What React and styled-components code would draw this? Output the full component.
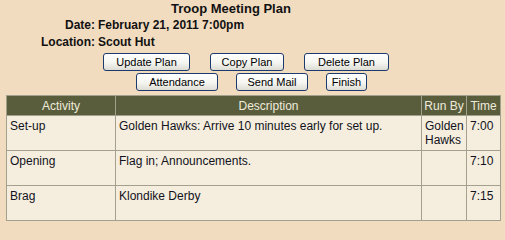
import React from "react";
import styled, { createGlobalStyle } from "styled-components";

const rows = [
    { activity: "Set-up", description: "Golden Hawks: Arrive 10 minutes early for set up.", runBy: "Golden Hawks", time: "7:00" },
    { activity: "Opening", description: "Flag in; Announcements.", runBy: "", time: "7:10" },
    { activity: "Brag", description: "Klondike Derby", runBy: "", time: "7:15" },
];

const App = () => {
    return (
        <DivRoot>
            <GlobalStyle />
            <H1Title>Troop Meeting Plan</H1Title>
            <DivInfo>
                <SpanLabel>Date:</SpanLabel>
                <SpanValue>February 21, 2011 7:00pm</SpanValue>
                <SpanLabel>Location:</SpanLabel>
                <SpanValue>Scout Hut</SpanValue>
            </DivInfo>
            <DivButtons>
                <DivButtonRow $indent={103} $gap={20}>
                    <Button $w={87}>Update Plan</Button>
                    <Button $w={74}>Copy Plan</Button>
                    <Button $w={85}>Delete Plan</Button>
                </DivButtonRow>
                <DivButtonRow $indent={136} $gap={18}>
                    <Button $w={82}>Attendance</Button>
                    <Button $w={72}>Send Mail</Button>
                    <Button $w={41}>Finish</Button>
                </DivButtonRow>
            </DivButtons>
            <Table>
                <colgroup>
                    <col style={{ width: "109px" }} />
                    <col style={{ width: "306px" }} />
                    <col style={{ width: "45px" }} />
                    <col style={{ width: "34px" }} />
                </colgroup>
                <thead>
                    <tr>
                        <Th>Activity</Th>
                        <Th>Description</Th>
                        <Th>Run By</Th>
                        <Th>Time</Th>
                    </tr>
                </thead>
                <tbody>
                    {rows.map((row) => (
                        <tr key={row.activity}>
                            <Td>{row.activity}</Td>
                            <Td>{row.description}</Td>
                            <Td>{row.runBy}</Td>
                            <Td>{row.time}</Td>
                        </tr>
                    ))}
                </tbody>
            </Table>
        </DivRoot>
    );
};

//#region Styles

const GlobalStyle = createGlobalStyle`
    html, body {
        margin: 0;
        padding: 0;
        background: #f2dcc0;
    }
    body {
        font-family: "Liberation Sans", Arial, sans-serif;
        color: #111;
    }
`;

const DivRoot = styled.div`
    width: 505px;
    display: flex;
    flex-direction: column;
`;

const H1Title = styled.h1`
    margin: 0;
    padding-left: 171px;
    font-size: 13px;
    font-weight: bold;
    line-height: 17px;
`;

const DivInfo = styled.div`
    display: grid;
    grid-template-columns: 95px auto;
    column-gap: 3px;
    font-size: 12px;
    font-weight: bold;
    line-height: 17px;
`;

const SpanLabel = styled.span`
    text-align: right;
`;

const SpanValue = styled.span`
    text-align: left;
`;

const DivButtons = styled.div`
    display: flex;
    flex-direction: column;
    gap: 2px;
    margin-top: 2px;
`;

const DivButtonRow = styled.div`
    display: flex;
    gap: ${(p) => p.$gap}px;
    padding-left: ${(p) => p.$indent}px;
`;

const Button = styled.button`
    box-sizing: border-box;
    width: ${(p) => p.$w}px;
    height: 18px;
    padding: 0;
    border: 1px solid #1d3a6c;
    border-radius: 3px;
    background: linear-gradient(#ffffff, #f5f5f1 55%, #dddcd4);
    font-family: "Liberation Sans", Arial, sans-serif;
    font-size: 11px;
    line-height: 14px;
    color: #000;
    cursor: pointer;
`;

const Table = styled.table`
    margin: 4px 0 0 6px;
    width: 494px;
    table-layout: fixed;
    border-collapse: collapse;
    font-size: 12px;
    line-height: 14px;
`;

const Th = styled.th`
    box-sizing: border-box;
    height: 20px;
    padding: 2px 1px;
    background: #5a5d3c;
    color: #efebdc;
    font-weight: normal;
    text-align: center;
    white-space: nowrap;
    border: 1px solid #a3a18e;
`;

const Td = styled.td`
    box-sizing: border-box;
    height: 35px;
    padding: 3px 2px 3px 3px;
    background: #f5eedf;
    vertical-align: top;
    border: 1px solid #a3a18e;
    color: #121220;
`;

//#endregion

export default App;
